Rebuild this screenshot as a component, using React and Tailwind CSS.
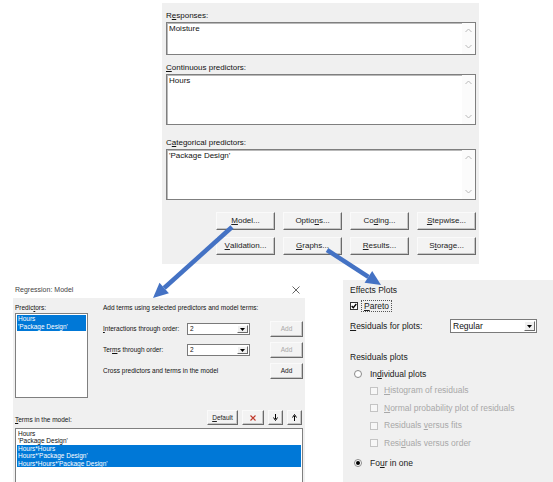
import React from "react";

const U = ({ children }) => <span className="underline underline-offset-[1px]">{children}</span>;

function Btn({ children, className = "" }) {
  return (
    <div
      className={`flex items-center justify-center bg-[#f3f3f3] border border-t-[#fafafa] border-l-[#fafafa] border-r-[#6a6a6a] border-b-[#6a6a6a] shadow-[inset_-1px_-1px_0_#c6c6c6] text-[#222] ${className}`}
    >
      {children}
    </div>
  );
}

function Chevron({ up }) {
  return (
    <svg width="7" height="5" viewBox="0 0 7 5" className="block">
      <path d={up ? "M0.5 4 L3.5 1 L6.5 4" : "M0.5 1 L3.5 4 L6.5 1"} fill="none" stroke="#b8b8b8" strokeWidth="1" />
    </svg>
  );
}

function TextBox({ h, text }) {
  return (
    <div className={`flex bg-white border border-[#7f7f7f] shadow-[inset_1px_1px_0_#b9b9b9] ${h}`}>
      <div className="flex-1 pl-[2px] pt-[1px] text-[8px] leading-[10px] text-[#111]">{text}</div>
      <div className="w-[13px] flex flex-col justify-between items-center py-[5px] bg-[#fbfbfb]">
        <Chevron up />
        <Chevron />
      </div>
    </div>
  );
}

function Select({ value, w, h, text }) {
  return (
    <div className={`flex items-center bg-white border border-[#7a7a7a] ${w} ${h}`}>
      <div className={`flex-1 pl-[2px] ${text} text-[#111]`}>{value}</div>
      <div className="h-full flex items-center pr-[1px] py-[1px]">
        <div className="w-[11px] h-full flex items-center justify-center bg-[#f0f0f0] border border-t-white border-l-white border-r-[#6a6a6a] border-b-[#6a6a6a]">
          <svg width="5" height="3" viewBox="0 0 5 3">
            <path d="M0 0 L5 0 L2.5 3 Z" fill="#000" />
          </svg>
        </div>
      </div>
    </div>
  );
}

function DisabledCheck({ children }) {
  return (
    <div className="flex items-center h-[17.5px] pl-[20px]">
      <div className="w-[8px] h-[8px] border border-[#c4c4c4] bg-[#f7f7f7]" />
      <span className="ml-[6px] text-[#a8a8a8]">{children}</span>
    </div>
  );
}

function Radio({ checked }) {
  return (
    <div className="w-[8px] h-[8px] rounded-full border border-[#8a8a8a] bg-white flex items-center justify-center">
      {checked && <div className="w-[4px] h-[4px] rounded-full bg-black" />}
    </div>
  );
}

export default function App() {
  return (
    <div className="relative w-[553px] h-[482px] bg-white overflow-hidden font-['Liberation_Sans',Arial,sans-serif]">
      {/* Top dialog */}
      <div className="ml-[162px] mt-[3px] w-[317px] h-[261px] bg-[#f0f0f0] pl-[4px] pr-[3px] pt-[8px] text-[8px] text-[#111]">
        <div className="leading-[10px]">R<U>e</U>sponses:</div>
        <div className="mt-[1px]">
          <TextBox h="h-[33px]" text="Moisture" />
        </div>
        <div className="leading-[10px] mt-[8px]"><U>C</U>ontinuous predictors:</div>
        <div className="mt-[1px]">
          <TextBox h="h-[51px]" text="Hours" />
        </div>
        <div className="leading-[10px] mt-[13px]">C<U>a</U>tegorical predictors:</div>
        <div className="mt-[1px]">
          <TextBox h="h-[51px]" text="'Package Design'" />
        </div>
        <div className="mt-[12px] flex justify-end gap-[8px]">
          <Btn className="w-[59px] h-[18px]"><U>M</U>odel...</Btn>
          <Btn className="w-[59px] h-[18px]">Optio<U>n</U>s...</Btn>
          <Btn className="w-[59px] h-[18px]">Co<U>d</U>ing...</Btn>
          <Btn className="w-[59px] h-[18px]"><U>S</U>tepwise...</Btn>
        </div>
        <div className="mt-[7px] flex justify-end gap-[8px]">
          <Btn className="w-[59px] h-[18px]"><U>V</U>alidation...</Btn>
          <Btn className="w-[59px] h-[18px]"><U>G</U>raphs...</Btn>
          <Btn className="w-[59px] h-[18px]"><U>R</U>esults...</Btn>
          <Btn className="w-[59px] h-[18px]">S<U>t</U>orage...</Btn>
        </div>
      </div>

      {/* Bottom row */}
      <div className="flex items-start">
        {/* Regression: Model dialog */}
        <div className="ml-[13px] w-[292px]">
          <div className="h-[34px] flex items-end justify-between pb-[3px] pl-[2px] pr-[5px] text-[7px] leading-[10px] text-[#444]">
            <span>Regression: Model</span>
            <svg width="8" height="8" viewBox="0 0 8 8" className="mb-[1px]">
              <path d="M0.5 0.5 L7.5 7.5 M7.5 0.5 L0.5 7.5" stroke="#555" strokeWidth="0.9" />
            </svg>
          </div>
          <div className="h-[184px] bg-[#f0f0f0] px-[2px] text-[6.5px] text-[#111]">
            <div className="flex">
              <div className="w-[73px] pt-[5px]">
                <div className="leading-[10px]">Predic<U>t</U>ors:</div>
                <div className="h-[85px] bg-white border border-[#7f7f7f] p-[1px] leading-[8px]">
                  <div className="bg-[#0078d7] text-white pl-[1px]">
                    <div>Hours</div>
                    <div>'Package Design'</div>
                  </div>
                </div>
              </div>
              <div className="ml-[15px] w-[200px] pt-[5px]">
                <div className="leading-[10px]">Add terms using selected predictors and model terms:</div>
                <div className="mt-[8px] flex items-center h-[16px]">
                  <div className="w-[84px]"><U>I</U>nteractions through order:</div>
                  <Select value="2" w="w-[63px]" h="h-[12px]" text="text-[6.5px] leading-[10px]" />
                  <Btn className="ml-[20px] w-[33px] h-[16px] text-[#a8a8a8]">Add</Btn>
                </div>
                <div className="mt-[5px] flex items-center h-[16px]">
                  <div className="w-[84px]">Ter<U>m</U>s through order:</div>
                  <Select value="2" w="w-[63px]" h="h-[12px]" text="text-[6.5px] leading-[10px]" />
                  <Btn className="ml-[20px] w-[33px] h-[16px] text-[#a8a8a8]">Add</Btn>
                </div>
                <div className="mt-[5px] flex items-center h-[16px]">
                  <div className="w-[167px]">Cross predictors and terms in the model</div>
                  <Btn className="w-[33px] h-[16px]">Add</Btn>
                </div>
              </div>
            </div>
            <div className="mt-[12px] flex items-end justify-between pr-[1px]">
              <div className="leading-[9px] pb-[1px]"><U>T</U>erms in the model:</div>
              <div className="flex gap-[4px]">
                <Btn className="w-[31px] h-[15px]"><U>D</U>efault</Btn>
                <Btn className="w-[22px] h-[15px] text-[#c0392b]">
                  <svg width="6" height="6" viewBox="0 0 6 6">
                    <path d="M0.5 0.5 L5.5 5.5 M5.5 0.5 L0.5 5.5" stroke="#c0392b" strokeWidth="1.1" />
                  </svg>
                </Btn>
                <Btn className="w-[15px] h-[15px]">
                  <svg width="5" height="7" viewBox="0 0 5 7">
                    <path d="M2.5 0 L2.5 5 M0.5 3.5 L2.5 6.5 L4.5 3.5" stroke="#000" strokeWidth="1" fill="none" />
                  </svg>
                </Btn>
                <Btn className="w-[15px] h-[15px]">
                  <svg width="5" height="7" viewBox="0 0 5 7">
                    <path d="M2.5 7 L2.5 2 M0.5 3.5 L2.5 0.5 L4.5 3.5" stroke="#000" strokeWidth="1" fill="none" />
                  </svg>
                </Btn>
              </div>
            </div>
            <div className="mt-[3px] w-[288px] h-[60px] bg-white border border-[#7f7f7f] p-[1px] text-[6.5px] leading-[7.4px]">
              <div className="pl-[1px]">Hours</div>
              <div className="pl-[1px]">'Package Design'</div>
              <div className="bg-[#0078d7] text-white pl-[1px]">
                <div>Hours*Hours</div>
                <div>Hours*'Package Design'</div>
                <div>Hours*Hours*'Package Design'</div>
              </div>
            </div>
          </div>
        </div>

        {/* Graphs panel */}
        <div className="ml-[38px] mt-[16px] w-[210px] h-[202px] bg-[#f0f0f0] pl-[7px] pt-[4px] text-[8.5px] text-[#1a1a1a]">
          <div className="leading-[12px]">Effects Plots</div>
          <div className="mt-[4px] flex items-center h-[12px]">
            <div className="w-[8px] h-[8px] border border-[#333] bg-white flex items-center justify-center">
              <svg width="6" height="6" viewBox="0 0 6 6">
                <path d="M0.7 3 L2.3 4.7 L5.3 1" stroke="#000" strokeWidth="1.3" fill="none" />
              </svg>
            </div>
            <span className="ml-[3px] px-[2px] border border-dotted border-[#555] leading-[10px]"><U>P</U>areto</span>
          </div>
          <div className="mt-[7px] flex items-center h-[14px]">
            <div className="w-[100px]"><U>R</U>esiduals for plots:</div>
            <Select value="Regular" w="w-[87px]" h="h-[14px]" text="text-[8.5px] leading-[12px]" />
          </div>
          <div className="mt-[18px] leading-[12px]">Residuals plots</div>
          <div className="mt-[5px] flex items-center h-[12px] pl-[4px]">
            <Radio />
            <span className="ml-[8px]">In<U>d</U>ividual plots</span>
          </div>
          <div className="mt-[2px]">
            <DisabledCheck><U>H</U>istogram of residuals</DisabledCheck>
            <DisabledCheck><U>N</U>ormal probability plot of residuals</DisabledCheck>
            <DisabledCheck>Residuals <U>v</U>ersus fits</DisabledCheck>
            <DisabledCheck>Resi<U>d</U>uals versus order</DisabledCheck>
          </div>
          <div className="mt-[5px] flex items-center h-[12px] pl-[4px]">
            <Radio checked />
            <span className="ml-[8px]">Fo<U>u</U>r in one</span>
          </div>
        </div>
      </div>

      {/* Arrows overlay */}
      <svg className="absolute inset-0 pointer-events-none" width="553" height="482" viewBox="0 0 553 482">
        <line x1="232" y1="227" x2="164.2" y2="288" stroke="#4472c4" strokeWidth="4.5" />
        <polygon points="153,298 168.9,293.2 159.5,282.8" fill="#4472c4" />
        <line x1="327" y1="250" x2="368.4" y2="276.8" stroke="#4472c4" strokeWidth="4.5" />
        <polygon points="381,285 364.6,282.7 372.2,270.9" fill="#4472c4" />
      </svg>
    </div>
  );
}
